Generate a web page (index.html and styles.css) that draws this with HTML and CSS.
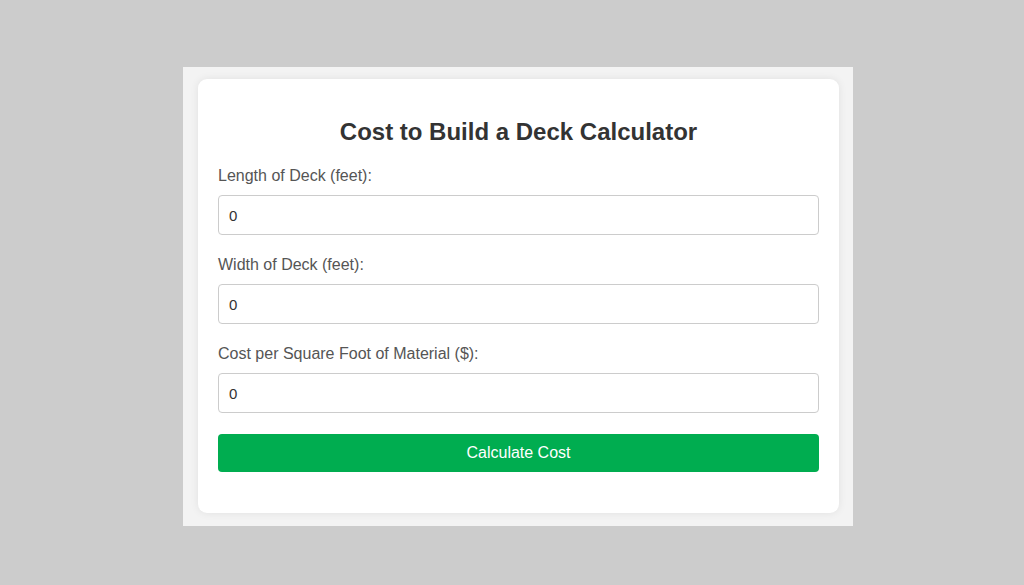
FILE: index.html
```html
<!DOCTYPE html>
<html>
<head>
<meta charset="utf-8">
<link rel="stylesheet" href="styles.css">
</head>
<body>
<div class="panel">
  <div class="card">
    <h2 class="title">Cost to Build a Deck Calculator</h2>
    <div class="field">
      <label class="label">Length of Deck (feet):</label>
      <input class="input" type="text" value="0">
    </div>
    <div class="field">
      <label class="label">Width of Deck (feet):</label>
      <input class="input" type="text" value="0">
    </div>
    <div class="field">
      <label class="label">Cost per Square Foot of Material ($):</label>
      <input class="input" type="text" value="0">
    </div>
    <button class="btn">Calculate Cost</button>
  </div>
</div>
</body>
</html>
```
FILE: styles.css
```css
html, body {
  margin: 0;
  padding: 0;
}
body {
  background: #cccccc;
  width: 1024px;
  height: 585px;
  padding: 67px 0 0 183px;
  box-sizing: border-box;
  font-family: "Liberation Sans", Arial, sans-serif;
}
.panel {
  width: 670px;
  height: 459px;
  background: #f3f3f3;
  padding: 12px 14px 13px 15px;
  box-sizing: border-box;
}
.card {
  background: #ffffff;
  border-radius: 9px;
  box-shadow: 0 0 8px rgba(0, 0, 0, 0.08);
  padding: 20px 20px 41px 20px;
  height: 434px;
  box-sizing: border-box;
  display: flex;
  flex-direction: column;
}
.title {
  margin: 20px 0 24px;
  font-size: 24px;
  line-height: 25px;
  font-weight: bold;
  color: #333333;
  text-align: center;
}
.field {
  display: flex;
  flex-direction: column;
  margin-bottom: 22px;
}
.label {
  font-size: 16px;
  line-height: 16px;
  color: #555555;
  margin-bottom: 11px;
}
.input {
  height: 40px;
  box-sizing: border-box;
  border: 1px solid #cccccc;
  border-radius: 4px;
  padding: 0 10px;
  font-family: "Liberation Sans", Arial, sans-serif;
  font-size: 15px;
  color: #333333;
  outline: none;
}
.btn {
  margin-top: -1px;
  height: 38px;
  border: none;
  border-radius: 4px;
  background: #00ad50;
  color: #ffffff;
  font-family: "Liberation Sans", Arial, sans-serif;
  font-size: 16px;
}
```
